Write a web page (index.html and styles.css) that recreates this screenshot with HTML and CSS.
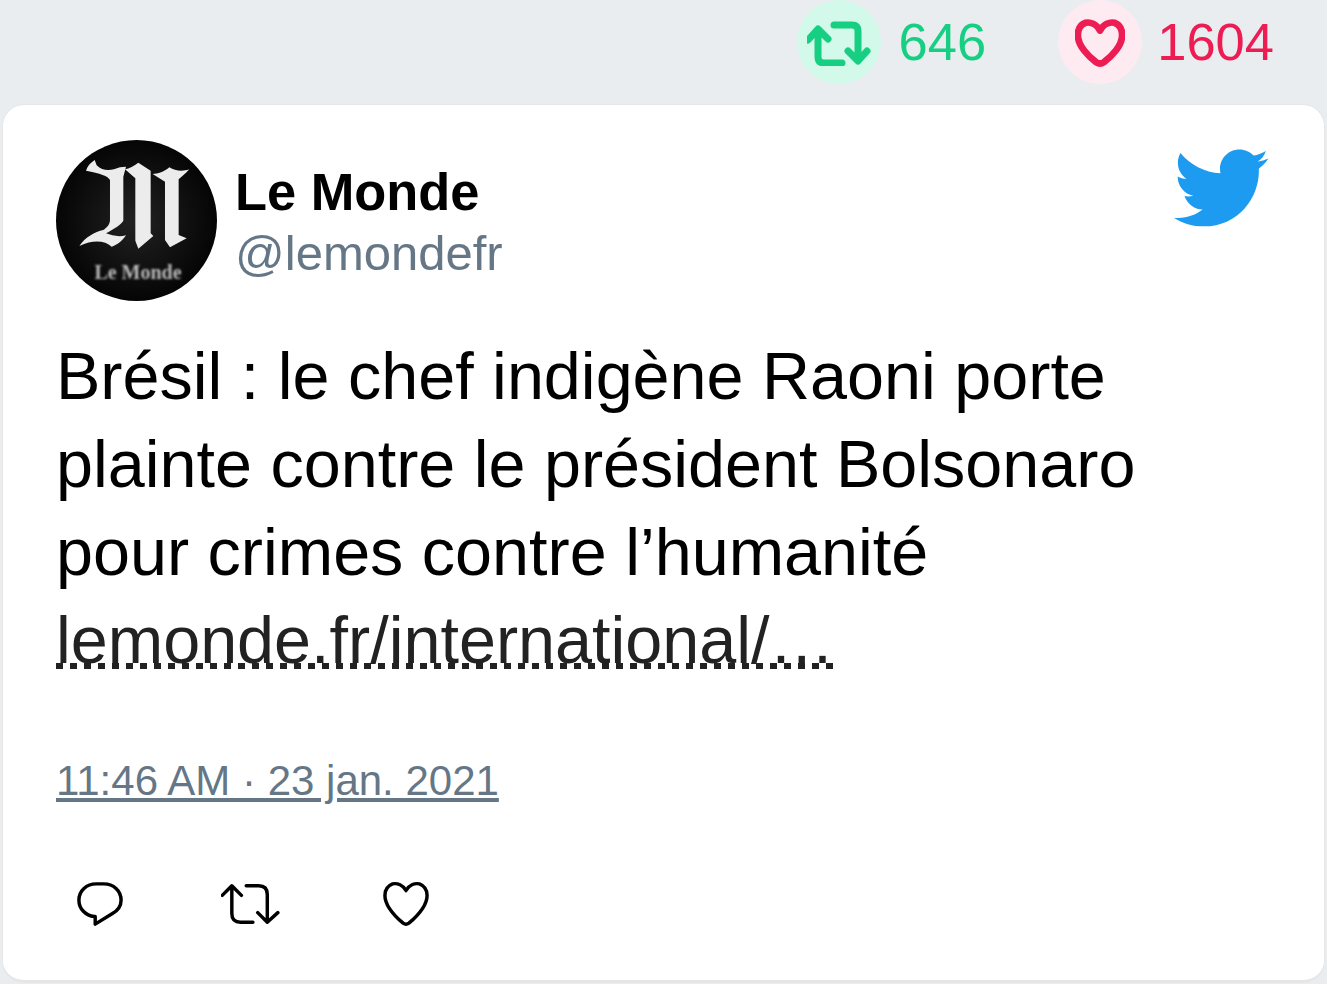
FILE: index.html
```html
<!DOCTYPE html>
<html lang="en">

<head>
    <meta charset="UTF-8">
    <meta name="viewport" content="width=device-width, initial-scale=1.0">
    <title>Tweet</title>
    <link rel="stylesheet" href="styles.css">
</head>

<body>
    <!-- Counters above the card -->
    <div class="stats">
        <div class="stat stat-retweet">
            <span class="stat-icon">
                <svg viewBox="2 -3 64 48" width="64" height="48">
                    <path d="M3 19 L13 8 L23 18 M13 9 V36 Q13 42 19 42 H37 M29 4 H47 Q53 4 53 10 V38 M43 30 L53 40 L62 30" fill="none" stroke="currentColor" stroke-width="7" stroke-linecap="round" stroke-linejoin="round" />
                </svg>
            </span>
            <span class="stat-count">646</span>
        </div>
        <div class="stat stat-like">
            <span class="stat-icon">
                <svg viewBox="0 -1 52 50" width="50" height="50">
                    <path d="M26 12 C22 5 16 3 11 4 C5 6 3 11 3 17 C3 28 14 39 22 45 C25 47 27 47 30 45 C38 39 49 28 49 17 C49 11 47 6 41 4 C36 3 30 5 26 12 Z" fill="none" stroke="currentColor" stroke-width="7" stroke-linejoin="round" />
                </svg>
            </span>
            <span class="stat-count">1604</span>
        </div>
    </div>

    <!-- Tweet card -->
    <div class="card">
        <div class="card-head">
            <div class="author">
                <svg class="avatar" viewBox="0 0 161 161" width="161" height="161">
                    <defs>
                        <radialGradient id="disc">
                            <stop offset="0" stop-color="#222222" />
                            <stop offset="1" stop-color="#050505" />
                        </radialGradient>
                        <filter id="soft"><feGaussianBlur stdDeviation="0.9" /></filter>
                    </defs>
                    <circle cx="80.5" cy="80.5" r="80.5" fill="url(#disc)" />
                    <!-- blackletter M, coordinates taken at 3x -->
                    <g transform="translate(14 10) scale(0.3333)" filter="url(#soft)" fill="#ececec">
                        <path d="M48 62 C52 48 62 38 74 30 L80 46 C100 66 125 62 150 52 L168 50 L160 80 V212 C150 228 125 240 108 250 C125 256 145 262 168 256 C155 275 140 285 125 290 C105 272 70 268 28 288 C45 262 75 245 100 240 C112 232 120 222 120 210 V90 C115 78 90 70 48 62 Z" />
                        <path d="M165 58 C178 55 192 48 205 38 L242 62 V250 L250 258 L205 296 L196 272 V85 Z" />
                        <path d="M248 72 C262 72 285 65 298 52 C315 62 335 66 358 58 C345 72 335 80 326 88 V255 L350 265 L300 292 L285 270 V95 Z" />
                    </g>
                    <text class="avatar-name" x="82" y="139" text-anchor="middle" filter="url(#soft)">Le Monde</text>
                </svg>
                <div class="author-names">
                    <div class="author-name">Le Monde</div>
                    <div class="author-handle">@lemondefr</div>
                </div>
            </div>
            <svg class="bird" viewBox="0 0 24 24" width="100" height="100">
                <path fill="#1d9bf0" d="M23.643 4.937c-.835.37-1.732.62-2.675.733.962-.576 1.7-1.49 2.048-2.578-.9.534-1.897.922-2.958 1.13-.85-.904-2.06-1.47-3.4-1.47-2.572 0-4.658 2.086-4.658 4.66 0 .364.042.718.12 1.06-3.873-.195-7.304-2.05-9.602-4.868-.4.69-.63 1.49-.63 2.342 0 1.616.823 3.043 2.072 3.878-.764-.025-1.482-.234-2.11-.583v.06c0 2.257 1.605 4.14 3.737 4.568-.392.106-.803.162-1.227.162-.3 0-.593-.028-.877-.082.593 1.85 2.313 3.198 4.352 3.234-1.595 1.25-3.604 1.995-5.786 1.995-.376 0-.747-.022-1.112-.065 2.062 1.323 4.51 2.093 7.14 2.093 8.57 0 13.255-7.098 13.255-13.254 0-.2-.005-.402-.014-.602.91-.658 1.7-1.477 2.323-2.41z" />
            </svg>
        </div>

        <p class="tweet-text">Brésil : le chef indigène Raoni porte plainte contre le président Bolsonaro pour crimes contre l’humanité <a class="tweet-link" href="#">lemonde.fr/international<span class="link-end">/...</span></a></p>

        <a class="tweet-date" href="#">11:46 AM · 23 jan. 2021</a>

        <div class="actions">
            <svg viewBox="0 0 48 48" width="46" height="46">
                <path d="M20 3 H28 C38 3 46 10 46 20 C46 27 42 31 37 34 L19 45 V37 H18 C9 36 2 29 2 20 C2 10 10 3 20 3 Z" fill="none" stroke="#000" stroke-width="3.6" stroke-linejoin="round" />
            </svg>
            <svg class="action-retweet" viewBox="1 -2 62 48" width="60" height="46">
                <path d="M2 13 L12 3 L22 13 M12 4 V32 Q12 41 21 41 H34 M27 3 H40 Q49 3 49 12 V41 M39 31 L49 41 L60 31" fill="none" stroke="#000" stroke-width="3.6" stroke-linecap="round" stroke-linejoin="round" />
            </svg>
            <svg viewBox="0 0 48 48" width="46" height="46">
                <path d="M24 10 C21 4 15 2 10 3 C5 5 2 9 2 15 C2 26 14 38 21 44 C23 45.500 25 45.500 27 44 C34 38 46 26 46 15 C46 9 43 5 38 3 C33 2 27 4 24 10 Z" fill="none" stroke="#000" stroke-width="3.6" stroke-linejoin="round" />
            </svg>
        </div>
    </div>
</body>

</html>
```

FILE: styles.css
```css
/* Basic page styling */
body {
    margin: 0;
    height: 984px;
    overflow: hidden;
    background-color: #e9edf0;
    font-family: "Liberation Sans", Arial, sans-serif;
    color: black;
}

/* Counters above the card */
.stats {
    display: flex;
    justify-content: flex-end;
    gap: 72px;
    height: 84px;
    padding-right: 53px;
    margin-bottom: 20px;
}

.stat {
    display: flex;
    align-items: center;
    gap: 18px;
    font-size: 52.5px;
}

.stat-icon {
    display: flex;
    align-items: center;
    justify-content: center;
    width: 84px;
    height: 84px;
    border-radius: 50%;
}

.stat-count {
    margin-bottom: 2px;
}

.stat-retweet {
    color: #17cf82;
}

.stat-retweet .stat-icon {
    background-color: #d2f9e9;
}

.stat-like {
    gap: 15px;
    color: #ed1c52;
}

.stat-like .stat-icon {
    background-color: #fdebf1;
}

/* Tweet card */
.card {
    box-sizing: border-box;
    height: 879px;
    margin: 0 0 0 2px;
    width: 1323px;
    padding: 35px 54px 0 53px;
    background-color: white;
    border: 1px solid #e6e6e6;
    border-bottom-width: 3px;
    border-radius: 22px;
}

.card-head {
    display: flex;
    justify-content: space-between;
    align-items: flex-start;
}

.author {
    display: flex;
    align-items: center;
    gap: 18px;
}

.avatar {
    display: block;
}

.avatar-name {
    font-family: "Liberation Serif", serif;
    font-weight: bold;
    font-size: 20px;
    fill: #bbbbbb;
}

.author-names {
    padding-top: 4px;
}

.author-name {
    font-size: 52.4px;
    font-weight: bold;
    line-height: 61px;
}

.author-handle {
    margin-top: -1px;
    font-size: 49px;
    line-height: 62px;
    color: #657786;
}

.bird {
    margin-top: -2px;
}

.tweet-text {
    width: 1120px;
    margin: 31px 0 0 0;
    font-size: 66.5px;
    line-height: 88px;
}

/* dotted underline, square dots sitting right under the baseline */
.tweet-link {
    color: #222;
    text-decoration: none;
    background-image: linear-gradient(to right, #222 50%, transparent 50%);
    background-size: 14px 6px;
    background-repeat: repeat-x;
    background-position: 0 60px;
}

.link-end {
    letter-spacing: 2.25px;
}

.tweet-date {
    display: block;
    margin-top: 73px;
    font-size: 42px;
    color: #657786;
}

.actions {
    display: flex;
    gap: 98px;
    margin-top: 76px;
    padding-left: 21px;
}

.action-retweet {
    margin-right: 4px;
}
```
